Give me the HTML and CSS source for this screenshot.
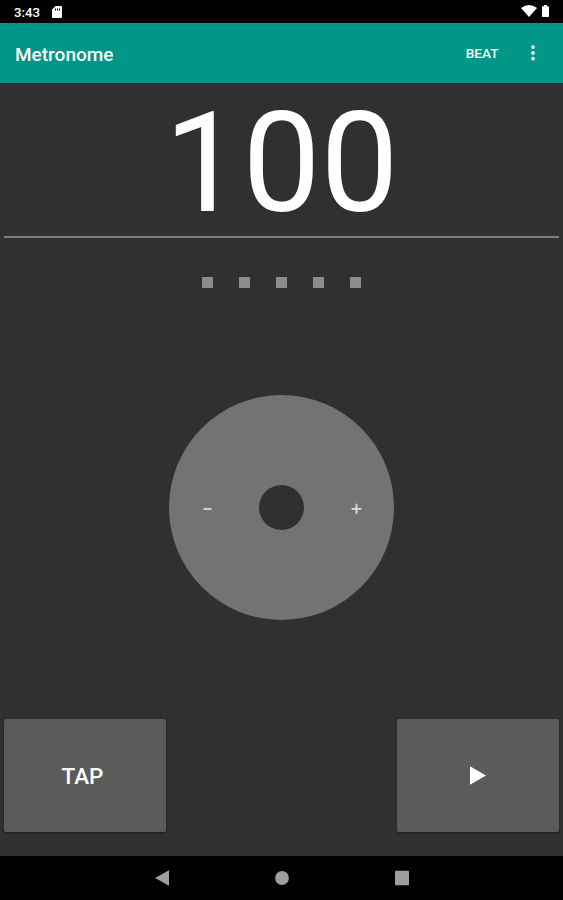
FILE: index.html
```html
<!DOCTYPE html>
<html lang="en">
<head>
  <meta charset="UTF-8">
  <meta name="viewport" content="width=device-width, initial-scale=1.0">
  <title>Metronome</title>
  <link rel="stylesheet" href="styles.css">
</head>
<body>
  <div class="status-bar">
    <span class="clock">3:43</span>
    <svg class="sd-card" width="10" height="12" viewBox="0 0 10 12">
      <path fill="#fff" fill-rule="evenodd" d="M3.5 0H9Q10 0 10 1V11Q10 12 9 12H1Q0 12 0 11V3.5ZM3 2.6V4.4H4V2.6ZM5 2.6V4.4H6V2.6ZM7 2.6V4.4H8V2.6Z"/>
    </svg>
    <svg class="wifi" width="16" height="12" viewBox="0 0 16 12">
      <path fill="#fff" d="M0 3Q8-3 16 3L8 12Z"/>
    </svg>
    <svg class="battery" width="7" height="12" viewBox="0 0 7 12">
      <path fill="#fff" d="M2 0H5V1.2H6.3Q7 1.2 7 2V11.3Q7 12 6.3 12H.7Q0 12 0 11.3V2Q0 1.2.7 1.2H2Z"/>
    </svg>
  </div>

  <header class="toolbar">
    <h1>Metronome</h1>
    <button class="beat">BEAT</button>
    <button class="menu" aria-label="More options">
      <svg width="4" height="16" viewBox="0 0 4 16" fill="#e8f5f3">
        <circle cx="2" cy="2.1" r="1.9"/>
        <circle cx="2" cy="7.9" r="1.9"/>
        <circle cx="2" cy="13.7" r="1.9"/>
      </svg>
    </button>
  </header>

  <main>
    <div class="tempo">100</div>

    <div class="beats">
      <span></span>
      <span></span>
      <span></span>
      <span></span>
      <span></span>
    </div>

    <div class="dial-area">
      <div class="dial">
        <svg width="9" height="13" viewBox="0 0 9 13"><path fill="#cfcfcf" d="M.5 6.9H8.5V9H.5Z"/></svg>
        <div class="hub"></div>
        <svg width="11" height="13" viewBox="0 0 11 13"><path fill="#dedede" d="M4.6 2.8H6.4V7H10.4V8.8H6.4V13H4.6V8.8H.6V7H4.6Z"/></svg>
      </div>
    </div>

    <div class="controls">
      <button class="control tap">TAP</button>
      <button class="control" aria-label="Play">
        <svg width="16" height="19" viewBox="0 0 16 19"><path fill="#fff" d="M0 .3V18.7L16 9.5Z"/></svg>
      </button>
    </div>
  </main>

  <nav class="nav-bar">
    <svg width="14" height="16" viewBox="0 0 14 16"><path fill="#9e9e9e" d="M14 .3V15.7L0 8Z"/></svg>
    <svg width="14" height="16" viewBox="0 0 14 16"><circle fill="#9e9e9e" cx="7" cy="8" r="6.9"/></svg>
    <svg width="14" height="16" viewBox="0 0 14 16"><rect fill="#9e9e9e" y=".7" width="14" height="14.6" rx=".7"/></svg>
  </nav>
</body>
</html>
```

FILE: styles.css
```css
* {
  box-sizing: border-box;
}

body {
  display: flex;
  flex-direction: column;
  height: 100vh;
  margin: 0;
  overflow: hidden;
  background-color: #303030;
  color: white;
  font-family: Roboto, sans-serif;
}

button {
  padding: 0;
  border: none;
  background: none;
  color: white;
  font-family: inherit;
  font-weight: 500;
}

svg {
  display: block;
}

.status-bar {
  display: flex;
  align-items: center;
  height: 23px;
  padding: 1px 14px 0 14px;
  background-color: black;
}

.clock {
  width: 38px;
  font-size: 13.2px;
  font-weight: 500;
}

.wifi {
  margin: -2px 5px 0 auto;
}

.battery {
  margin-top: -2px;
}

.toolbar {
  display: flex;
  align-items: center;
  height: 60px;
  padding: 0 28px 0 15px;
  background-color: #009688;
}

h1 {
  flex: 1;
  margin: 0;
  padding-top: 2px;
  font-size: 19px;
  font-weight: 500;
}

.beat {
  margin-right: 32.5px;
  font-size: 13.6px;
}

main {
  display: flex;
  flex: 1;
  flex-direction: column;
  border-top: 1px solid #292929;
}

.tempo {
  height: 154px;
  margin: 0 4px;
  border-bottom: 2px solid #7d7d7d;
  font-size: 139px;
  line-height: 160px;
  text-align: center;
}

.beats {
  display: flex;
  justify-content: center;
  gap: 26.4px;
  padding-top: 39px;
}

.beats span {
  width: 10.8px;
  height: 11px;
  background-color: #8c8c8c;
}

.dial-area {
  display: flex;
  flex: 1;
  justify-content: center;
  padding-top: 106.6px;
}

.dial {
  display: flex;
  align-items: center;
  justify-content: space-between;
  width: 225px;
  height: 225px;
  padding: 0 32px 0 34px;
  border-radius: 50%;
  background-color: #737373;
}

.hub {
  width: 45px;
  height: 45px;
  border-radius: 50%;
  background-color: #303030;
}

.controls {
  display: flex;
  justify-content: space-between;
  padding: 0 4px 24px;
}

.control {
  display: flex;
  align-items: center;
  justify-content: center;
  width: 162px;
  height: 113px;
  border-radius: 2px;
  background-color: #5b5b5c;
  box-shadow: 0 1px 2px rgba(0, 0, 0, 0.4);
  font-size: 22.5px;
}

.tap {
  padding-right: 5px;
}

.nav-bar {
  display: flex;
  justify-content: center;
  gap: 106px;
  height: 44px;
  padding-top: 14px;
  background-color: black;
}
```
